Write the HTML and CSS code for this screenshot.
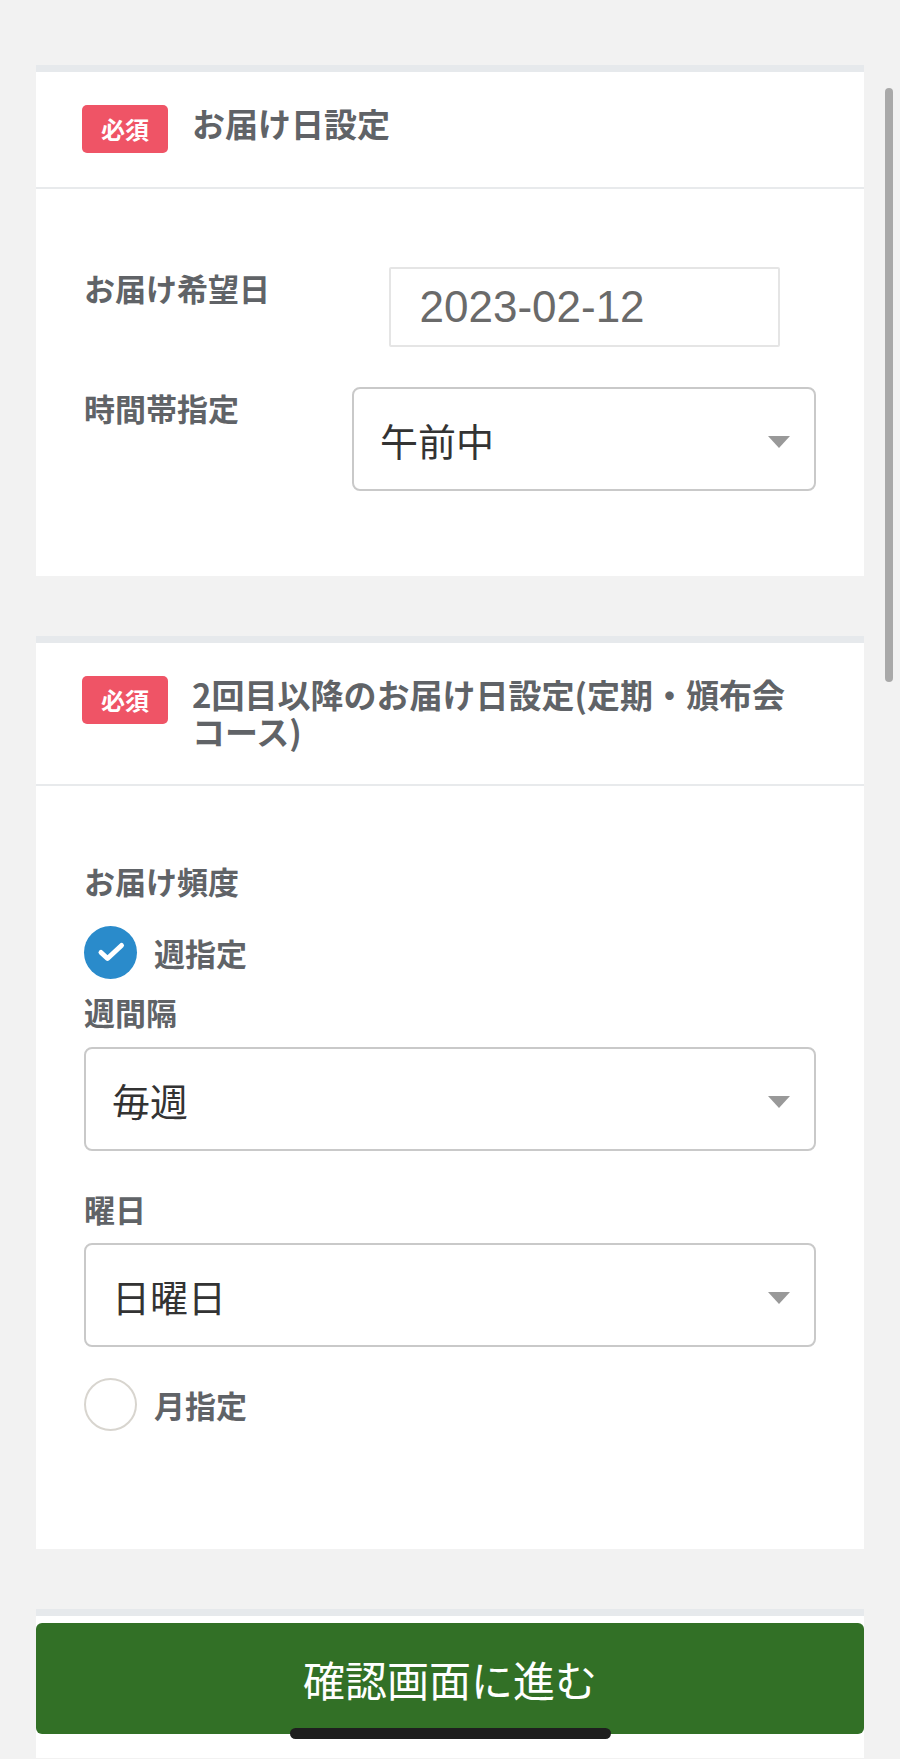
FILE: index.html
```html
<!DOCTYPE html>
<html lang="ja">
<head>
    <meta charset="UTF-8">
    <meta name="viewport" content="width=device-width, initial-scale=1.0">
    <title>お届け日設定</title>
    <link rel="stylesheet" href="styles.css">
</head>
<body>
    <main class="page">
        <!-- 初回のお届け日 -->
        <section class="panel">
            <div class="panel-head">
                <span class="badge">必須</span>
                <h2 class="panel-title">お届け日設定</h2>
            </div>
            <div class="panel-body first-body">
                <div class="field-row">
                    <div class="field-label">お届け希望日</div>
                    <div class="field-value">
                        <input type="text" class="date-input" value="2023-02-12" readonly>
                    </div>
                </div>
                <div class="field-row">
                    <div class="field-label">時間帯指定</div>
                    <div class="field-value">
                        <div class="select-wrap">
                            <select class="select">
                                <option selected>午前中</option>
                                <option>14時〜16時</option>
                                <option>16時〜18時</option>
                                <option>18時〜20時</option>
                            </select>
                        </div>
                    </div>
                </div>
            </div>
        </section>

        <!-- 2回目以降 -->
        <section class="panel">
            <div class="panel-head">
                <span class="badge">必須</span>
                <h2 class="panel-title">2回目以降のお届け日設定(定期・頒布会コース)</h2>
            </div>
            <div class="panel-body repeat-body">
                <div class="group-label">お届け頻度</div>

                <label class="choice">
                    <input type="radio" name="cycle" class="choice-input" checked>
                    <span class="choice-mark is-checked">
                        <svg width="53" height="53" viewBox="0 0 53 53">
                            <path d="M17 26.5 L23.5 32.5 L37.5 19.5" fill="none" stroke="#fff" stroke-width="5" stroke-linecap="round" stroke-linejoin="round"/>
                        </svg>
                    </span>
                    週指定
                </label>

                <div class="sub-label">週間隔</div>
                <div class="select-wrap">
                    <select class="select">
                        <option selected>毎週</option>
                        <option>2週間ごと</option>
                        <option>3週間ごと</option>
                        <option>4週間ごと</option>
                    </select>
                </div>

                <div class="sub-label sub-label-next">曜日</div>
                <div class="select-wrap">
                    <select class="select">
                        <option selected>日曜日</option>
                        <option>月曜日</option>
                        <option>火曜日</option>
                        <option>水曜日</option>
                        <option>木曜日</option>
                        <option>金曜日</option>
                        <option>土曜日</option>
                    </select>
                </div>

                <label class="choice choice-month">
                    <input type="radio" name="cycle" class="choice-input">
                    <span class="choice-mark"></span>
                    月指定
                </label>
            </div>
        </section>

        <section class="panel submit-panel">
            <button type="button" class="submit-btn">確認画面に進む</button>
        </section>
    </main>

    <div class="scroll-thumb"></div>
    <div class="home-indicator"></div>
</body>
</html>
```

FILE: styles.css
```css
body {
    margin: 0;
    background: #f2f2f2;
    font-family: "Noto Sans CJK JP", sans-serif;
    color: #606367;
}
.page {
    padding: 65px 36px 0;
}
.panel {
    background: #fff;
    border-top: 7px solid #e6e9ec;
    margin-bottom: 60px;
}
.panel-head {
    display: flex;
    align-items: flex-start;
    gap: 24px;
    padding: 33px 58px 34px 46px;
    border-bottom: 2px solid #e8eaec;
}
.badge {
    flex: none;
    width: 86px;
    height: 48px;
    line-height: 48px;
    text-align: center;
    background: #ef5466;
    color: #fff;
    font-size: 24px;
    font-weight: bold;
    border-radius: 5px;
}
.panel-title {
    margin: 0;
    font-size: 33px;
    line-height: 37px;
    font-weight: bold;
    color: #606367;
}
.panel-body {
    padding: 0 48px;
}
.first-body {
    padding-top: 78px;
    padding-bottom: 85px;
}
.repeat-body {
    padding-top: 74px;
    padding-bottom: 118px;
}

/* ラベル + 入力の横並び */
.field-row {
    display: grid;
    grid-template-columns: 268px 1fr;
    align-items: start;
}
.field-row + .field-row {
    margin-top: 40px;
}
.field-label,
.group-label,
.sub-label {
    font-size: 31px;
    font-weight: bold;
    line-height: 42px;
}
.date-input {
    display: block;
    box-sizing: border-box;
    width: 391px;
    height: 80px;
    margin: 0 auto;
    padding: 0 29px;
    border: 2px solid #e5e5e5;
    border-radius: 2px;
    outline: none;
    font-family: "Liberation Sans", Arial, sans-serif;
    font-size: 44px;
    color: #6a6a6a;
    background: #fff;
}

/* select + 下向き三角 */
.select-wrap {
    position: relative;
}
.select-wrap::after {
    content: "";
    position: absolute;
    right: 26px;
    top: 50%;
    margin-top: -3px;
    border-left: 11.5px solid transparent;
    border-right: 11.5px solid transparent;
    border-top: 12px solid #999;
    pointer-events: none;
}
.select {
    -webkit-appearance: none;
    appearance: none;
    display: block;
    box-sizing: border-box;
    width: 100%;
    height: 104px;
    padding: 0 26px;
    border: 2px solid #c9c9c9;
    border-radius: 8px;
    background: #fff;
    font-family: "Noto Sans CJK JP", sans-serif;
    font-size: 38px;
    color: #333;
    outline: none;
}

/* お届け頻度 */
.choice {
    display: flex;
    align-items: center;
    gap: 17px;
    margin-top: 24px;
    font-size: 31px;
    font-weight: bold;
    line-height: 42px;
    cursor: pointer;
}
.choice-input {
    display: none;
}
.choice-mark {
    flex: none;
    display: block;
    box-sizing: border-box;
    width: 53px;
    height: 53px;
    border-radius: 50%;
    border: 2px solid #d8d5cf;
}
.choice-mark.is-checked {
    border: none;
    background: #2a8bcb;
}
.choice-mark svg {
    display: block;
}
.choice-month {
    margin-top: 31px;
}
.sub-label {
    margin-top: 12px;
    margin-bottom: 14px;
}
.sub-label-next {
    margin-top: 37px;
    margin-bottom: 13px;
}

/* 確認ボタン */
.submit-panel {
    margin-bottom: 0;
    padding: 7px 0 24px;
}
.submit-btn {
    display: block;
    width: 100%;
    height: 111px;
    border: none;
    border-radius: 6px;
    background: #327026;
    color: #fff;
    font-family: "Noto Sans CJK JP", sans-serif;
    font-size: 42px;
    cursor: pointer;
}

.scroll-thumb {
    position: fixed;
    top: 88px;
    right: 7px;
    width: 8px;
    height: 594px;
    border-radius: 4px;
    background: #a9a9a9;
}
.home-indicator {
    position: fixed;
    left: 290px;
    bottom: 20px;
    width: 321px;
    height: 11px;
    border-radius: 6px;
    background: #1e1e1e;
}
```
